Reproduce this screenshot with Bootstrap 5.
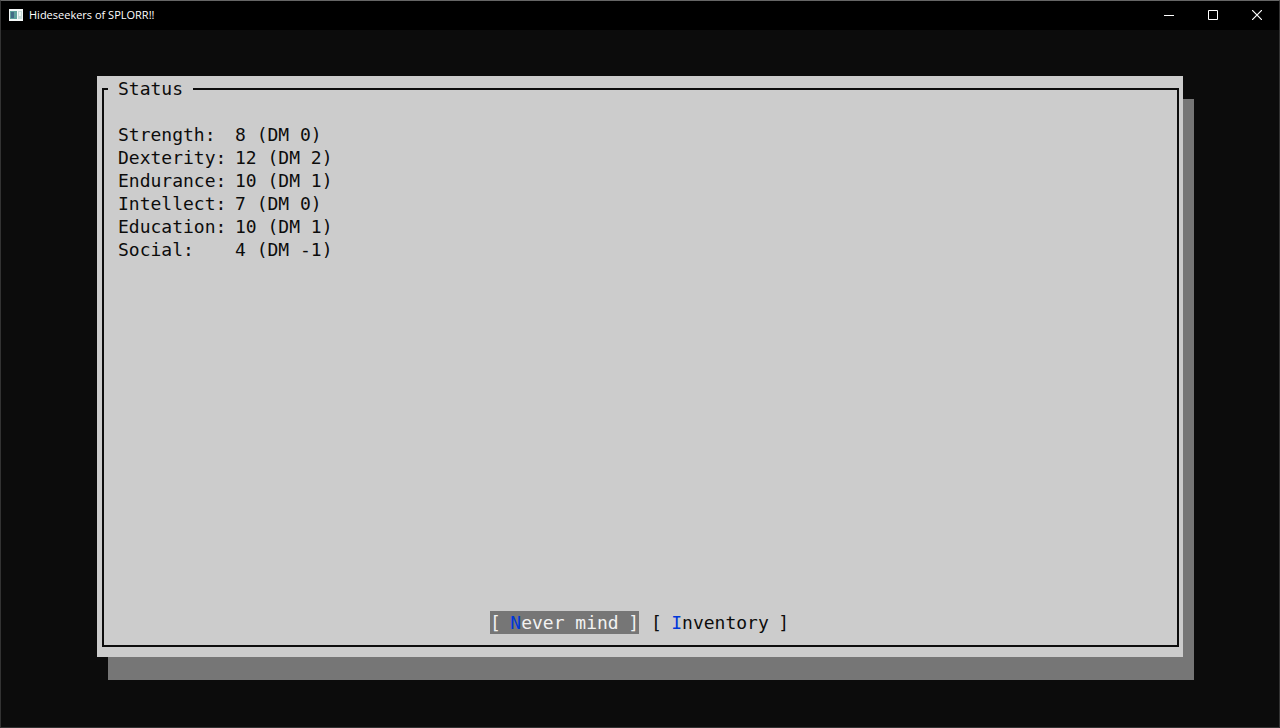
<!DOCTYPE html>
<html lang="en">
<head>
<meta charset="utf-8">
<meta name="viewport" content="width=device-width, initial-scale=1">
<title>Hideseekers of SPLORR!!</title>
<link href="https://cdn.jsdelivr.net/npm/bootstrap@5.3.0/dist/css/bootstrap.min.css" rel="stylesheet">
<style>
  .console-window {
    background: #0c0c0c;
    border: 1px solid #333;
    border-top-color: #666;
    font-family: "DejaVu Sans Mono", monospace;
    font-size: 18px;
    line-height: 23px;
  }
  .title-bar {
    height: 29px;
    padding: 0 0 2px 8px;
    background: #000;
    color: #fff;
    font-family: "Open Sans", sans-serif;
    font-size: 11px;
    line-height: 16px;
  }
  .title-bar h1 { font-size: 11px; line-height: 16px; margin: 0 0 0 6px; font-weight: 400; }
  .caption-btn { width: 44px; color: #fff; }
  .caption-btn svg { display: block; }
  .desktop { padding: 46px 96px 70px; }
  .dialog-panel {
    background: #ccc;
    color: #0c0c0c;
    padding: 1px 4px 10px 5px;
    box-shadow: 11px 23px 0 #767676;
  }
  .frame { border: 2px solid #0c0c0c; }
  .frame legend {
    float: none;
    width: auto;
    margin: 0 0 0 4px;
    padding: 0 10px;
    font-size: 18px;
    line-height: 23px;
  }
  .frame-body { padding: 23px 16px 11px 14px; }
  .stats th { width: 117px; font-weight: 400; }
  .stats th, .stats td { padding: 0; }
  .tui-btn { padding: 0; border: 0; background: none; color: #0c0c0c; line-height: 23px; }
  .tui-btn.chosen { background: #767676; color: #f2f2f2; }
  .btn-long { width: 149px; }
  .btn-short { width: 138px; }
  .hotkey { color: #0037da; }
  .action-row { gap: 12px; }
</style>
</head>
<body>
<div class="console-window vh-100 d-flex flex-column">
  <header class="title-bar d-flex align-items-center">
    <svg width="14" height="12" viewBox="0 0 14 12" aria-hidden="true">
      <rect width="14" height="12" fill="#f4f8f8"/>
      <rect x="1" y="2" width="7" height="8" fill="#5fa09c"/>
      <rect x="2" y="3" width="3" height="6" fill="#426a86"/>
      <rect x="9" y="2" width="4" height="8" fill="#c6dcda"/>
      <rect x="10" y="3" width="2" height="4" fill="#eef6f4"/>
    </svg>
    <h1>Hideseekers of SPLORR!!</h1>
    <div class="d-flex ms-auto align-self-stretch">
      <button type="button" class="caption-btn btn p-0 border-0 rounded-0 d-flex align-items-center justify-content-center" aria-label="Minimize">
        <svg width="10" height="10" viewBox="0 0 10 10"><path d="M0 5.5h10" stroke="#fff"/></svg>
      </button>
      <button type="button" class="caption-btn btn p-0 border-0 rounded-0 d-flex align-items-center justify-content-center" aria-label="Maximize">
        <svg width="10" height="10" viewBox="0 0 10 10"><path d="M.5.5h9v9h-9z" stroke="#fff" fill="none"/></svg>
      </button>
      <button type="button" class="caption-btn btn p-0 border-0 rounded-0 d-flex align-items-center justify-content-center" aria-label="Close">
        <svg width="10" height="10" viewBox="0 0 10 10"><path d="M0 0l10 10M10 0L0 10" stroke="#fff" stroke-width="1.2"/></svg>
      </button>
    </div>
  </header>

  <main class="desktop flex-grow-1 d-flex">
    <section class="dialog-panel flex-grow-1 d-flex">
      <fieldset class="frame flex-grow-1 d-flex flex-column">
        <legend>Status</legend>
        <div class="frame-body flex-grow-1 d-flex flex-column">
          <table class="stats align-self-start">
            <tbody>
              <tr><th scope="row">Strength:</th><td>8 (DM 0)</td></tr>
              <tr><th scope="row">Dexterity:</th><td>12 (DM 2)</td></tr>
              <tr><th scope="row">Endurance:</th><td>10 (DM 1)</td></tr>
              <tr><th scope="row">Intellect:</th><td>7 (DM 0)</td></tr>
              <tr><th scope="row">Education:</th><td>10 (DM 1)</td></tr>
              <tr><th scope="row">Social:</th><td>4 (DM -1)</td></tr>
            </tbody>
          </table>
          <div class="action-row d-flex justify-content-center mt-auto">
            <button type="button" class="tui-btn chosen btn-long d-flex justify-content-between"><span>[</span><span><span class="hotkey">N</span>ever mind</span><span>]</span></button>
            <button type="button" class="tui-btn btn-short d-flex justify-content-between"><span>[</span><span><span class="hotkey">I</span>nventory</span><span>]</span></button>
          </div>
        </div>
      </fieldset>
    </section>
  </main>
</div>
<script src="https://cdn.jsdelivr.net/npm/bootstrap@5.3.0/dist/js/bootstrap.bundle.min.js"></script>
</body>
</html>
